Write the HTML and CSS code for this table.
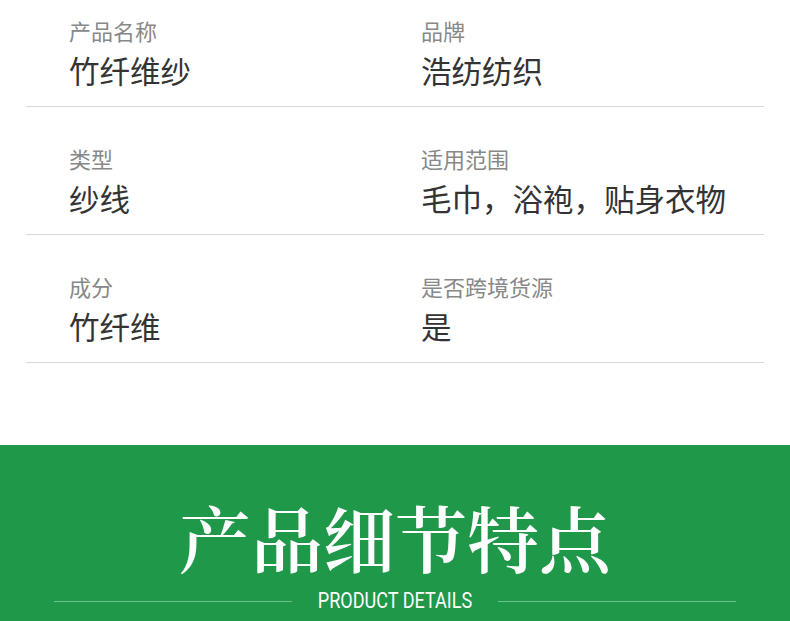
FILE: index.html
```html
<!DOCTYPE html>
<html lang="zh">
<head>
  <meta charset="UTF-8" />
  <meta name="viewport" content="width=device-width, initial-scale=1" />
  <title>产品参数</title>
  <link rel="stylesheet" href="styles.css">
</head>
<body>
  <div class="spec-table">
    <div class="spec-row">
      <div class="spec-cell">
        <div class="spec-label">产品名称</div>
        <div class="spec-value">竹纤维纱</div>
      </div>
      <div class="spec-cell">
        <div class="spec-label">品牌</div>
        <div class="spec-value">浩纺纺织</div>
      </div>
    </div>
    <div class="spec-row">
      <div class="spec-cell">
        <div class="spec-label">类型</div>
        <div class="spec-value">纱线</div>
      </div>
      <div class="spec-cell">
        <div class="spec-label">适用范围</div>
        <div class="spec-value">毛巾，浴袍，贴身衣物</div>
      </div>
    </div>
    <div class="spec-row">
      <div class="spec-cell">
        <div class="spec-label">成分</div>
        <div class="spec-value">竹纤维</div>
      </div>
      <div class="spec-cell">
        <div class="spec-label">是否跨境货源</div>
        <div class="spec-value">是</div>
      </div>
    </div>
  </div>

  <section class="banner">
    <h2 class="banner-title">产品细节特点</h2>
    <div class="banner-sub">
      <span class="banner-line"></span>
      <span class="banner-en">PRODUCT DETAILS</span>
      <span class="banner-line"></span>
    </div>
  </section>
</body>
</html>
```

FILE: styles.css
```css
body {
  margin: 0;
  background: #fff;
  font-family: "Noto Sans CJK SC", "Noto Sans", sans-serif;
  overflow: hidden;
}
.spec-table {
  margin: -21px 26px 0;
}
.spec-row {
  display: grid;
  grid-template-columns: 352px 1fr;
  padding: 36px 0 16px 43px;
  border-bottom: 1px solid #d9d9d9;
}
.spec-label {
  font-size: 22px;
  line-height: 30px;
  color: #888;
}
.spec-value {
  margin-top: 5px;
  font-size: 30.5px;
  line-height: 40px;
  color: #333;
}

.banner {
  margin-top: 82px;
  background: #1f984a;
  padding: 55px 54px 40px;
  color: #fff;
}
.banner-title {
  margin: 0;
  text-align: center;
  font-family: "Noto Serif CJK SC", "Source Han Serif SC", "Noto Sans CJK SC", serif;
  font-weight: 600;
  font-size: 72px;
  line-height: 72px;
}
.banner-sub {
  display: flex;
  align-items: center;
  margin-top: 16px;
}
.banner-line {
  flex: 1;
  height: 1px;
  background: #6cc08a;
}
.banner-en {
  width: 206px;
  text-align: center;
  font-family: "Roboto", "Liberation Sans", sans-serif;
  font-size: 22px;
  line-height: 26px;
  transform: scaleX(0.82);
}
```
